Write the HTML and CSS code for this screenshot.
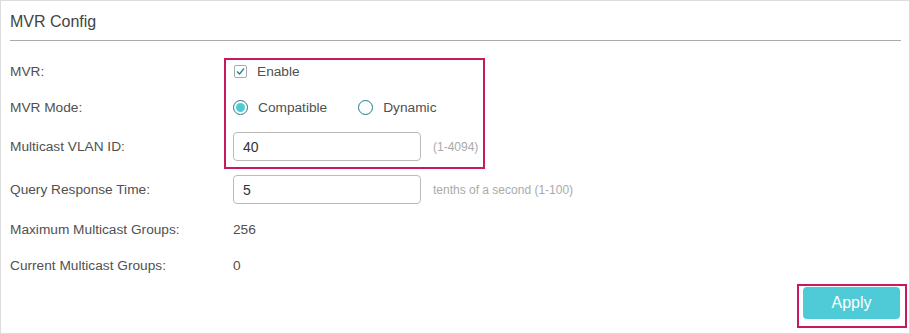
FILE: index.html
```html
<!DOCTYPE html>
<html lang="en">
<head>
    <meta charset="UTF-8">
    <title>MVR Config</title>
    <link rel="stylesheet" href="styles.css">
</head>
<body>
    <div class="panel">
        <h2 class="panel-title">MVR Config</h2>

        <div class="form">
            <div class="row">
                <span class="label">MVR:</span>
                <label class="check">
                    <span class="check-box">
                        <svg width="11" height="11" viewBox="0 0 11 11"><path d="M2 5.5 L4.5 8 L9 2.5" fill="none" stroke="#1f7f8c" stroke-width="1.2"/></svg>
                    </span>
                    Enable
                </label>
            </div>

            <div class="row">
                <span class="label">MVR Mode:</span>
                <label class="radio"><span class="radio-dot checked"></span>Compatible</label>
                <label class="radio"><span class="radio-dot"></span>Dynamic</label>
            </div>

            <div class="row tall">
                <span class="label">Multicast VLAN ID:</span>
                <input class="text-input" type="text" value="40">
                <span class="hint">(1-4094)</span>
            </div>

            <div class="row tall">
                <span class="label">Query Response Time:</span>
                <input class="text-input" type="text" value="5">
                <span class="hint">tenths of a second (1-100)</span>
            </div>

            <div class="row">
                <span class="label">Maximum Multicast Groups:</span>
                <span class="value">256</span>
            </div>

            <div class="row">
                <span class="label">Current Multicast Groups:</span>
                <span class="value">0</span>
            </div>
        </div>

        <div class="actions">
            <button class="apply-btn">Apply</button>
        </div>

        <div class="mark mark-form"></div>
        <div class="mark mark-apply"></div>
    </div>
</body>
</html>
```

FILE: styles.css
```css
* {
    margin: 0;
    padding: 0;
    box-sizing: border-box;
    font-family: 'Liberation Sans', Arial, sans-serif;
}

body {
    background: #fff;
}

.panel {
    position: relative;
    width: 910px;
    height: 334px;
    border: 1px solid #dcdcdc;
    padding: 0 8px 0 9px;
}

.panel-title {
    font-size: 16px;
    font-weight: normal;
    color: #444;
    height: 40px;
    line-height: 42px;
    border-bottom: 1px solid #aaa;
}

.form {
    padding-top: 12px;
}

.row {
    display: flex;
    align-items: center;
    height: 36px;
    font-size: 13.7px;
    color: #505050;
}

.row.tall {
    height: 43px;
}

.label {
    width: 223px;
    flex-shrink: 0;
}

.check {
    display: flex;
    align-items: center;
    gap: 10px;
}

.check-box {
    width: 13px;
    height: 13px;
    border: 1px solid #aaa;
    border-radius: 2px;
    display: flex;
    align-items: center;
    justify-content: center;
    margin-left: 1px;
}

.radio {
    display: flex;
    align-items: center;
    gap: 10px;
    margin-right: 31px;
}

.radio-dot {
    width: 15px;
    height: 15px;
    border: 1.5px solid #1f7a86;
    border-radius: 50%;
    display: flex;
    align-items: center;
    justify-content: center;
}

.radio-dot.checked::after {
    content: '';
    width: 9px;
    height: 9px;
    border-radius: 50%;
    background: #4ecbd6;
}

.text-input {
    width: 188px;
    height: 29px;
    border: 1px solid #bbb;
    border-radius: 4px;
    padding: 0 9px;
    font-size: 14px;
    color: #333;
    outline: none;
}

.hint {
    margin-left: 12px;
    font-size: 12px;
    color: #aaa;
}

.value {
    color: #505050;
}

.actions {
    display: flex;
    justify-content: flex-end;
    padding-top: 4px;
}

.apply-btn {
    width: 97px;
    height: 32px;
    background: #4ecbd6;
    color: #fff;
    border: none;
    border-radius: 4px;
    font-size: 16px;
    margin-right: 1px;
}

.mark {
    position: absolute;
    border: 2px solid #c8195f;
    pointer-events: none;
}

.mark-form {
    left: 223px;
    top: 57px;
    width: 261px;
    height: 111px;
}

.mark-apply {
    left: 796px;
    top: 283px;
    width: 110px;
    height: 44px;
}
```
